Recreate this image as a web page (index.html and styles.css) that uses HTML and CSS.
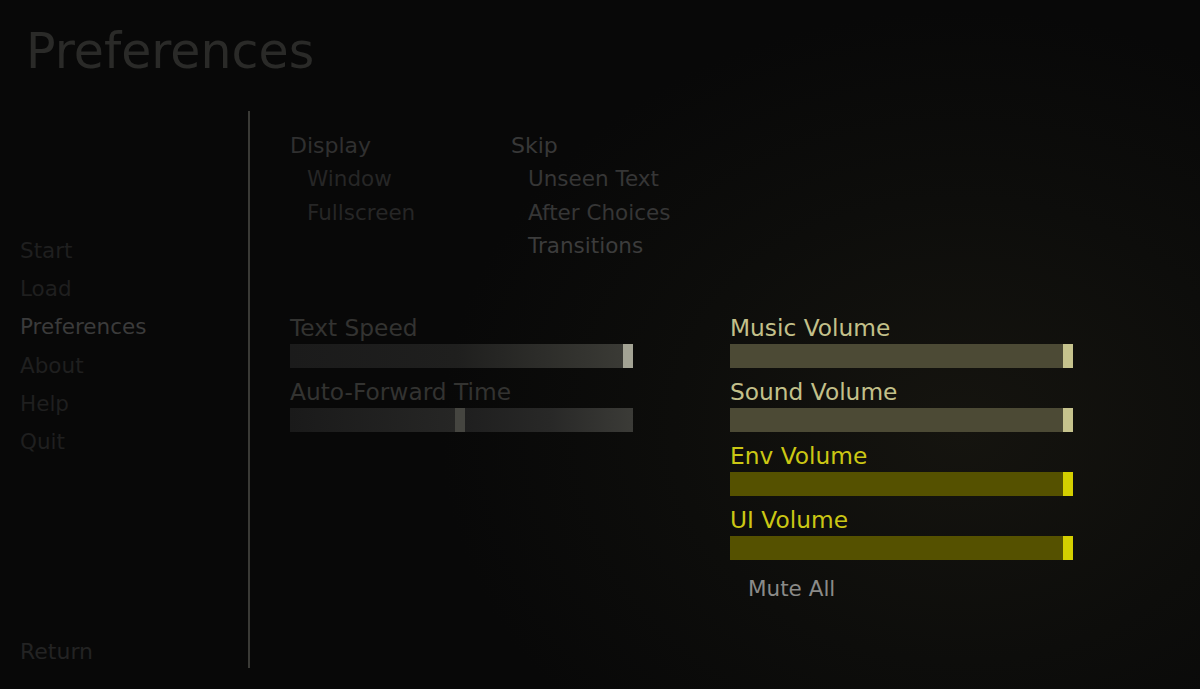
FILE: index.html
```html
<!DOCTYPE html>
<html lang="en">
<head>
<meta charset="utf-8">
<title>Preferences</title>
<link rel="stylesheet" href="styles.css">
</head>
<body>
<div class="screen">
  <h1 class="title">Preferences</h1>
  <div class="main">
    <nav class="nav">
      <div class="nav-list">
        <div class="nav-item">Start</div>
        <div class="nav-item">Load</div>
        <div class="nav-item nav-current">Preferences</div>
        <div class="nav-item">About</div>
        <div class="nav-item">Help</div>
        <div class="nav-item">Quit</div>
      </div>
      <div class="nav-item nav-return">Return</div>
    </nav>
    <div class="divider"></div>
    <section class="content">
      <div class="toggles">
        <div class="group">
          <div class="group-label">Display</div>
          <div class="opt">Window</div>
          <div class="opt">Fullscreen</div>
        </div>
        <div class="group">
          <div class="group-label group-skip">Skip</div>
          <div class="opt opt-on">Unseen Text</div>
          <div class="opt opt-on">After Choices</div>
          <div class="opt opt-on2">Transitions</div>
        </div>
      </div>
      <div class="sliders">
        <div class="slider-col">
          <div class="slider">
            <div class="slider-label dim">Text Speed</div>
            <div class="bar bar-grey">
              <div class="bar-fill bar-fill-full"></div>
              <div class="thumb thumb-light"></div>
            </div>
          </div>
          <div class="slider">
            <div class="slider-label dim">Auto-Forward Time</div>
            <div class="bar bar-split">
              <div class="bar-left" style="width:165px"></div>
              <div class="thumb thumb-dark"></div>
              <div class="bar-right"></div>
            </div>
          </div>
        </div>
        <div class="slider-col">
          <div class="slider">
            <div class="slider-label khaki">Music Volume</div>
            <div class="bar bar-khaki"><div class="bar-fill"></div><div class="thumb thumb-khaki"></div></div>
          </div>
          <div class="slider">
            <div class="slider-label khaki">Sound Volume</div>
            <div class="bar bar-khaki"><div class="bar-fill"></div><div class="thumb thumb-khaki"></div></div>
          </div>
          <div class="slider">
            <div class="slider-label yellow">Env Volume</div>
            <div class="bar bar-yellow"><div class="bar-fill"></div><div class="thumb thumb-yellow"></div></div>
          </div>
          <div class="slider">
            <div class="slider-label yellow">UI Volume</div>
            <div class="bar bar-yellow"><div class="bar-fill"></div><div class="thumb thumb-yellow"></div></div>
          </div>
          <div class="mute">Mute All</div>
        </div>
      </div>
    </section>
  </div>
</div>
</body>
</html>
```
FILE: styles.css
```css
html, body {
  margin: 0;
  padding: 0;
  background: #080808;
}

.screen {
  width: 1200px;
  height: 689px;
  overflow: hidden;
  font-family: "DejaVu Sans", "Liberation Sans", sans-serif;
  background:
    radial-gradient(ellipse 520px 420px at 960px 430px, #15140f 0%, #0d0d0b 55%, rgba(8,8,8,0) 100%),
    #080808;
}

.title {
  margin: 0;
  padding: 22px 0 0 26px;
  height: 90px;
  box-sizing: border-box;
  font-size: 49px;
  font-weight: normal;
  line-height: 60px;
  color: #2a2a28;
}

.main {
  display: flex;
  height: 557px;
  margin-top: 21px;
}

.nav {
  width: 248px;
  box-sizing: border-box;
  padding: 121px 0 0 20px;
  display: flex;
  flex-direction: column;
  font-size: 21.5px;
}

.nav-list {
  display: flex;
  flex-direction: column;
}

.nav-item {
  line-height: 38.2px;
  color: #1f1f1f;
}

.nav-current {
  color: #3b3b3b;
}

.nav-return {
  margin-top: auto;
  margin-bottom: -3px;
  color: #232323;
  font-size: 22px;
}

.divider {
  width: 2px;
  background: #3a3a36;
}

.content {
  padding: 19px 0 0 40px;
  font-size: 21.5px;
}

.toggles {
  display: grid;
  grid-template-columns: 221px auto;
}

.group-label {
  line-height: 32px;
  color: #303030;
  font-size: 22px;
}

.group-skip {
  color: #383838;
}

.opt {
  line-height: 33.5px;
  padding-left: 17px;
  color: #262626;
}

.opt-on {
  color: #363636;
}

.opt-on2 {
  color: #3c3c3c;
}

.sliders {
  margin-top: 49px;
  display: grid;
  grid-template-columns: 343px 343px;
  column-gap: 97px;
}

.slider {
  margin-bottom: 8px;
}

.slider-label {
  line-height: 32px;
  font-size: 23.3px;
}

.dim { color: #333331; }
.khaki { color: #c3c08a; }
.yellow { color: #cbc714; }

.bar {
  height: 24px;
  display: flex;
}

.bar-fill {
  flex: 1;
}

.thumb {
  width: 10px;
}

.bar-grey .bar-fill {
  background: linear-gradient(to right, #1b1b1b 0%, #1f1f1e 50%, #3a3a35 100%);
}

.thumb-light {
  background: #a3a394;
}

.bar-split .bar-left {
  background: linear-gradient(to right, #1a1a1a 0%, #262625 100%);
}

.bar-split .bar-right {
  flex: 1;
  background: linear-gradient(to right, #1f1f1f 0%, #282827 50%, #3b3b37 100%);
}

.thumb-dark {
  background: #454540;
}

.bar-khaki .bar-fill {
  background: #4c4a35;
}

.thumb-khaki {
  background: #c6c38d;
}

.bar-yellow .bar-fill {
  background: #555100;
}

.thumb-yellow {
  background: #d4cf00;
}

.mute {
  padding-top: 4px;
  line-height: 34px;
  padding-left: 18px;
  color: #8a8a88;
}
```
